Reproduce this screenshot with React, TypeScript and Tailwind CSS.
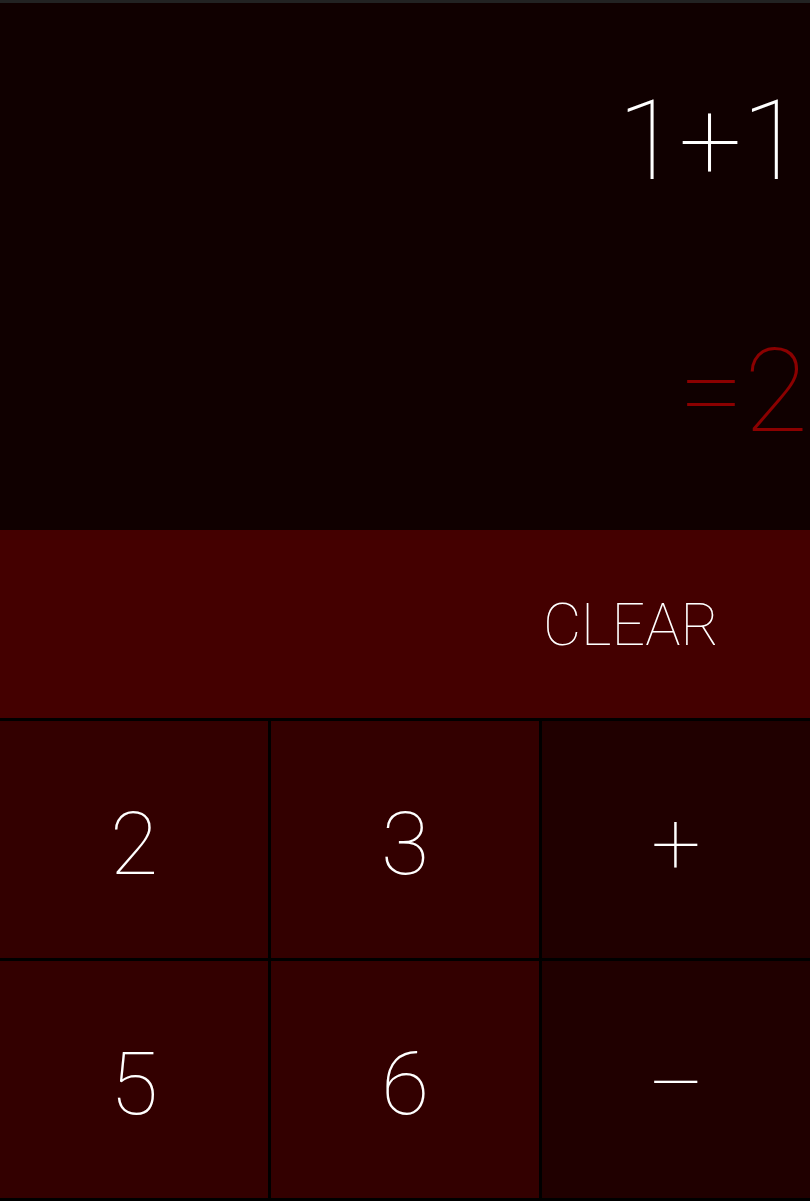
import React from "react";

const font = { fontFamily: "Roboto, 'Noto Sans', sans-serif" };

export default function App() {
  const rows = [
    ["2", "3", "+"],
    ["5", "6", "–"],
  ];
  return (
    <div className="w-[810px] h-[1201px] overflow-hidden bg-black flex flex-col" style={font}>
      <div className="h-[3px] bg-[#222222]" />
      <div className="h-[527px] bg-[#100000] flex flex-col items-end">
        <div className="mt-[68px] mr-[7px] text-[112px] leading-[140px] font-thin text-white">1+1</div>
        <div className="mt-[110px] mr-[2px] text-[117px] leading-[140px] font-thin text-[#8b0000]">=2</div>
      </div>
      <div className="h-[188px] bg-[#440000] flex items-center justify-end pr-[91px]">
        <span className="text-[59px] font-thin text-white leading-none">CLEAR</span>
      </div>
      <div className="grid grid-cols-3 gap-[3px] py-[3px] bg-black">
        {rows.map((r, i) =>
          r.map((k, j) => (
            <div
              key={`${i}-${j}`}
              className={`h-[237px] pt-[8px] flex items-center justify-center text-white font-thin text-[88px] leading-none ${
                j === 2 ? "bg-[#200000]" : "bg-[#330000]"
              }`}
            >
              {k}
            </div>
          ))
        )}
      </div>
    </div>
  );
}
